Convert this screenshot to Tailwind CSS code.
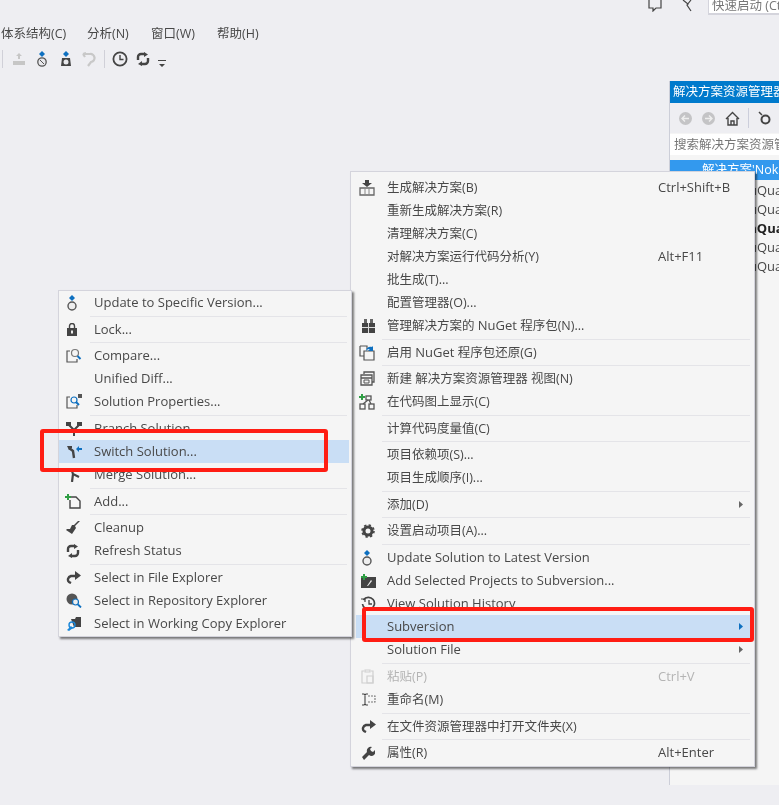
<!DOCTYPE html>
<html lang="zh">
<head>
<meta charset="utf-8">
<script src="https://cdn.jsdelivr.net/npm/@tailwindcss/browser@4"></script>
<title>Visual Studio</title>
</head>
<body class="m-0">
<div class="relative w-[779px] h-[805px] overflow-hidden bg-[#eeeef2] text-[#484848] text-[12.5px] leading-[16px] font-['Open_Sans','Noto_Sans_CJK_SC',sans-serif] blur-[0.5px]">

  <!-- top strip -->
  <div class="h-[15px] flex justify-end items-start">
    <svg class="w-[16px] h-[12px] mr-[19px]" viewBox="0 0 16 12" fill="none" stroke="#444" stroke-width="1.2"><path d="M2 0v8h4v3l3-3h5V0"/></svg>
    <svg class="w-[12px] h-[12px] mr-[14px]" viewBox="0 0 12 12" fill="none" stroke="#444" stroke-width="1.2"><path d="M1 0l5 4-1 1 4 6M5 5l4-5"/></svg>
    <div class="w-[71px] h-[15px] bg-white border-b-2 border-l border-[#d4d4dc] pl-[3px] leading-[11px] text-[#777] whitespace-nowrap overflow-hidden">快速启动 (Ctrl+Q)</div>
  </div>

  <!-- menu bar -->
  <div class="flex mt-[11px] h-[16px] pl-[1px] items-center">
    <span class="w-[86px]">体系结构(C)</span>
    <span class="w-[64px]">分析(N)</span>
    <span class="w-[66px]">窗口(W)</span>
    <span>帮助(H)</span>
  </div>

  <!-- toolbar -->
  <div class="flex items-center h-[20px] mt-[7px] pl-[2px]">
    <div class="w-px h-[18px] bg-[#d0d0d8]"></div>
    <svg class="w-[14px] h-[14px] ml-[9px]" viewBox="0 0 14 14" fill="#c6c6c6"><path d="M7 1l3 3H8v3H6V4H4zM1 9h12v4H1z"/></svg>
    <svg class="w-[14px] h-[16px] ml-[9px]" viewBox="0 0 14 16"><path d="M7 0l3 3-3 3-3-3z" fill="#0e70c0"/><circle cx="7" cy="11" r="4.2" fill="#e8e8ec" stroke="#555" stroke-width="1.3"/><path d="M5 9l4 4" stroke="#555"/></svg>
    <svg class="w-[14px] h-[16px] ml-[10px]" viewBox="0 0 14 16"><path d="M7 0l3 3-3 3-3-3z" fill="#0e70c0"/><path d="M3 7h8l1 8H2z" fill="#444"/><circle cx="7" cy="11" r="2.5" fill="#e8e8ec"/></svg>
    <svg class="w-[15px] h-[15px] ml-[8px]" viewBox="0 0 15 15" fill="none" stroke="#c8c8c8" stroke-width="2.2"><path d="M2 2h7a4 4 0 0 1 1 8l-3 4M2 2l3-1M2 2l2 3"/></svg>
    <div class="w-px h-[18px] bg-[#d0d0d8] ml-[8px]"></div>
    <svg class="w-[16px] h-[16px] ml-[7px]" viewBox="0 0 16 16" fill="none" stroke="#444" stroke-width="1.8"><circle cx="8" cy="8" r="6.6"/><path d="M8 4v4.5h3.5" stroke-width="1.4"/></svg>
    <svg class="w-[14px] h-[14px] ml-[8px]" viewBox="0 0 14 14" fill="none" stroke="#444" stroke-width="2.4"><path d="M2 8V5a3 3 0 0 1 3-3h4"/><path d="M12 6v3a3 3 0 0 1-3 3H5"/><path d="M8 0l4 2.500-4 2.500zM6 9l-4 3 4 2z" fill="#444" stroke="none"/></svg>
    <svg class="w-[8px] h-[8px] ml-[8px] mt-[9px]" viewBox="0 0 8 8" fill="#444"><path d="M0 0h8v1H0zM1 4h6L4 7z"/></svg>
  </div>

  <!-- solution explorer -->
  <div class="mt-[12px] ml-auto w-[110px] h-[704px] bg-[#f5f5f5] border-l border-[#ccced8] overflow-hidden whitespace-nowrap">
    <div class="h-[22px] bg-[#007acc] text-white flex items-center pl-[3px]">解决方案资源管理器</div>
    <div class="h-[30px] flex items-center bg-[#eeeef2] pl-[9px]">
      <svg class="w-[13px] h-[13px]" viewBox="0 0 13 13"><circle cx="6.5" cy="6.5" r="6.5" fill="#c4c4c6"/><path d="M3 6.5h7M6 3.5l-3 3 3 3" fill="none" stroke="#eee" stroke-width="1.4"/></svg>
      <svg class="w-[13px] h-[13px] ml-[10px]" viewBox="0 0 13 13"><circle cx="6.5" cy="6.5" r="6.5" fill="#c4c4c6"/><path d="M3 6.5h7M7 3.5l3 3-3 3" fill="none" stroke="#eee" stroke-width="1.4"/></svg>
      <svg class="w-[15px] h-[15px] ml-[10px]" viewBox="0 0 15 15" fill="none" stroke="#444" stroke-width="1.4"><path d="M1 8l6.5-6.500L14 8M3 7v7h9V7M6 14v-4h3v4"/></svg>
      <div class="w-px h-[20px] bg-[#cccedb] ml-[8px]"></div>
      <svg class="w-[13px] h-[14px] ml-[9px]" viewBox="0 0 13 14" fill="none" stroke="#444" stroke-width="2"><circle cx="7.5" cy="8.5" r="4"/><path d="M1 1l3 3" stroke-width="1.5"/></svg>
    </div>
    <div class="h-[21px] mt-px bg-white text-[#777] flex items-center pl-[4px]">搜索解决方案资源管理器</div>
    <div class="mt-[5px] h-[20px] bg-[#3399ee] text-white flex items-center pl-[13px]">
      <svg class="w-[14px] h-[14px] mr-[19px]" viewBox="0 0 14 14"><rect x=".5" y=".5" width="13" height="13" fill="#f5f5f5" stroke="#444"/><rect x="4" y="4" width="5" height="5" fill="#444"/></svg>解决方案'Nokia
    </div>
    <div class="h-[19px] pl-[79px] flex items-center text-[13px]">uQuality</div>
    <div class="h-[19px] pl-[79px] flex items-center text-[13px]">uQuality</div>
    <div class="h-[19px] pl-[79px] flex items-center text-[13px] font-bold text-[#222]">aQuality</div>
    <div class="h-[19px] pl-[79px] flex items-center text-[13px]">uQuality</div>
    <div class="h-[19px] pl-[79px] flex items-center text-[13px]">uQuality</div>
  </div>

  <!-- solution context menu -->
  <div class="absolute left-[350px] top-[171px] w-[405px] h-[596px] bg-[#f5f5f5] border border-[#d4d4dc] pt-[4px] shadow-[2px_2px_2px_rgba(0,0,0,0.5)] whitespace-nowrap">
    <div class="h-[23px] flex items-center"><div class="w-[36px] flex justify-center -ml-[2px] mr-[2px]"><svg class="w-[16px] h-[16px]" viewBox="0 0 16 16"><path d="M6 0h4v3h3l-5 4-5-4h3z" fill="#444"/><path d="M1 8h14v7H1z" fill="none" stroke="#666" stroke-width="1.3"/><path d="M6 8v7M10 8v7" stroke="#888"/></svg></div><span class="w-[271px]">生成解决方案(B)</span><span class="text-[13px] pb-[2px]">Ctrl+Shift+B</span></div>
    <div class="h-[23px] flex items-center"><div class="w-[36px]"></div><span>重新生成解决方案(R)</span></div>
    <div class="h-[23px] flex items-center"><div class="w-[36px]"></div><span>清理解决方案(C)</span></div>
    <div class="h-[23px] flex items-center"><div class="w-[36px]"></div><span class="w-[271px]">对解决方案运行代码分析(Y)</span><span class="text-[13px] pb-[2px]">Alt+F11</span></div>
    <div class="h-[23px] flex items-center"><div class="w-[36px]"></div><span>批生成(T)...</span></div>
    <div class="h-[23px] flex items-center"><div class="w-[36px]"></div><span>配置管理器(O)...</span></div>
    <div class="h-[23px] flex items-center"><div class="w-[36px] flex justify-center -ml-[1px] mr-[1px]"><svg class="w-[13px] h-[15px]" viewBox="0 0 13 15"><path d="M0 5h13v10H0z" fill="#444"/><path d="M2 1h3v4H2zM8 1h3v4H8z" fill="#666"/><path d="M0 9.500h13M6.500 5v10" stroke="#ddd"/></svg></div><span>管理解决方案的 <span class="text-[13px]">NuGet</span> 程序包(N)...</span></div>
    <div class="h-[4px] ml-[31px] mr-[4px] flex items-center"><div class="h-px w-full bg-[#e4e4e8]"></div></div>
    <div class="h-[23px] flex items-center"><div class="w-[36px] flex justify-center -ml-[2px] mr-[2px]"><svg class="w-[16px] h-[16px]" viewBox="0 0 16 16" fill="none" stroke="#555" stroke-width="1.2"><path d="M1 1h7v3M1 1v10h4"/><path d="M5 6h10v9H5z" fill="#f5f5f5"/><path d="M7 6c0-3 3-5 6-4l1-1v5h-5l1.500-1.500C10 3.500 8.500 4.500 7 6z" fill="#0e70c0" stroke="none"/></svg></div><span>启用 <span class="text-[13px]">NuGet</span> 程序包还原(G)</span></div>
    <div class="h-[3px] ml-[31px] mr-[4px] flex items-center"><div class="h-px w-full bg-[#e4e4e8]"></div></div>
    <div class="h-[23px] flex items-center"><div class="w-[36px] flex justify-center -ml-[2px] mr-[2px]"><svg class="w-[15px] h-[15px]" viewBox="0 0 15 15" fill="none" stroke="#555" stroke-width="1.3"><path d="M4 3V1h10v10h-2"/><path d="M1 4h11v10H1zM1 7h11"/><path d="M4 9h5v3H4z" stroke-width="1"/></svg></div><span>新建 解决方案资源管理器 视图(N)</span></div>
    <div class="h-[23px] flex items-center"><div class="w-[36px] flex justify-center -ml-[2px] mr-[2px]"><svg class="w-[16px] h-[16px]" viewBox="0 0 16 16" fill="none" stroke="#555" stroke-width="1.3"><path d="M3 0v6M0 3h6" stroke="#2f9e44" stroke-width="2"/><rect x="7" y="2" width="5" height="4"/><rect x="1" y="10" width="5" height="5"/><rect x="10" y="10" width="5" height="5"/><path d="M9 6l-5 4M10 6l2 4"/></svg></div><span>在代码图上显示(C)</span></div>
    <div class="h-[4px] ml-[31px] mr-[4px] flex items-center"><div class="h-px w-full bg-[#e4e4e8]"></div></div>
    <div class="h-[23px] flex items-center"><div class="w-[36px]"></div><span>计算代码度量值(C)</span></div>
    <div class="h-[3px] ml-[31px] mr-[4px] flex items-center"><div class="h-px w-full bg-[#e4e4e8]"></div></div>
    <div class="h-[23px] flex items-center"><div class="w-[36px]"></div><span>项目依赖项(S)...</span></div>
    <div class="h-[23px] flex items-center"><div class="w-[36px]"></div><span>项目生成顺序(I)...</span></div>
    <div class="h-[4px] ml-[31px] mr-[4px] flex items-center"><div class="h-px w-full bg-[#e4e4e8]"></div></div>
    <div class="h-[23px] flex items-center"><div class="w-[36px]"></div><span class="w-[352px]">添加(D)</span><svg class="w-[4px] h-[7px]" viewBox="0 0 4 7" fill="#666"><path d="M0 0l4 3.500L0 7z"/></svg></div>
    <div class="h-[3px] ml-[31px] mr-[4px] flex items-center"><div class="h-px w-full bg-[#e4e4e8]"></div></div>
    <div class="h-[23px] flex items-center"><div class="w-[36px] flex justify-center -ml-[1px] mr-[1px]"><svg class="w-[14px] h-[14px]" viewBox="0 0 14 14" fill="none" stroke="#444"><circle cx="7" cy="7" r="4" stroke-width="3"/><circle cx="7" cy="7" r="6" stroke-width="1.6" stroke-dasharray="2.4 2.3"/></svg></div><span>设置启动项目(A)...</span></div>
    <div class="h-[4px] ml-[31px] mr-[4px] flex items-center"><div class="h-px w-full bg-[#e4e4e8]"></div></div>
    <div class="h-[23px] flex items-center text-[13px] [&_span]:pb-[2px]"><div class="w-[36px] flex justify-center -ml-[2px] mr-[2px]"><svg class="w-[12px] h-[16px]" viewBox="0 0 12 16"><path d="M6 0l3 3-3 3-3-3z" fill="#0e70c0"/><circle cx="6" cy="11" r="4" fill="#eee" stroke="#555" stroke-width="1.4"/></svg></div><span>Update Solution to Latest Version</span></div>
    <div class="h-[23px] flex items-center text-[13px] [&_span]:pb-[2px]"><div class="w-[36px] flex justify-center -ml-[1px] mr-[1px]"><svg class="w-[15px] h-[14px]" viewBox="0 0 15 14"><path d="M0 3h15v11H0z" fill="#444"/><path d="M3 0v6M0 3h6" stroke="#2f9e44" stroke-width="2"/><path d="M6 12l4-6 1 1-4 5z" fill="#eee"/></svg></div><span>Add Selected Projects to Subversion...</span></div>
    <div class="h-[23px] flex items-center text-[13px] [&_span]:pb-[2px]"><div class="w-[36px] flex justify-center -ml-[1px] mr-[1px]"><svg class="w-[15px] h-[15px]" viewBox="0 0 15 15" fill="none" stroke="#444" stroke-width="1.7"><path d="M2.500 4a6 6 0 1 1-1 4"/><path d="M8 4v4h3" stroke-width="1.3"/><path d="M0 3h4v3" stroke-width="1.2"/></svg></div><span>View Solution History</span></div>
    <div class="h-[23px] flex items-center bg-[#c9def5] mr-[3px] ml-[5px] text-[13px] [&_span]:pb-[2px]"><div class="w-[31px]"></div><span class="w-[352px]">Subversion</span><svg class="w-[4px] h-[7px]" viewBox="0 0 4 7" fill="#0e70c0"><path d="M0 0l4 3.500L0 7z"/></svg></div>
    <div class="h-[23px] flex items-center text-[13px] [&_span]:pb-[2px]"><div class="w-[36px]"></div><span class="w-[352px]">Solution File</span><svg class="w-[4px] h-[7px]" viewBox="0 0 4 7" fill="#666"><path d="M0 0l4 3.500L0 7z"/></svg></div>
    <div class="h-[4px] ml-[31px] mr-[4px] flex items-center"><div class="h-px w-full bg-[#e4e4e8]"></div></div>
    <div class="h-[23px] flex items-center text-[#b4b4b4]"><div class="w-[36px] flex justify-center -ml-[2px] mr-[2px]"><svg class="w-[13px] h-[15px]" viewBox="0 0 13 15" fill="none" stroke="#d0d0d0" stroke-width="1.2"><path d="M3 2H1v12h11V2h-2M4 3V1h5v2z"/><path d="M6 7h6v7H6z"/></svg></div><span class="w-[271px]">粘贴(P)</span><span class="text-[13px] pb-[2px]">Ctrl+V</span></div>
    <div class="h-[23px] flex items-center"><div class="w-[36px] flex justify-center -ml-[1px] mr-[1px]"><svg class="w-[15px] h-[13px]" viewBox="0 0 15 13" fill="none" stroke="#444" stroke-width="1.1"><path d="M1 1h2l1 1 1-1h2M4 2v9M1 12h2l1-1 1 1h2"/><path d="M7 3h7v6H7" stroke="#777" stroke-dasharray="2 1"/></svg></div><span>重命名(M)</span></div>
    <div class="h-[4px] ml-[31px] mr-[4px] flex items-center"><div class="h-px w-full bg-[#e4e4e8]"></div></div>
    <div class="h-[23px] flex items-center"><div class="w-[36px] flex justify-center -ml-[1px] mr-[1px]"><svg class="w-[15px] h-[13px]" viewBox="0 0 15 13" fill="none" stroke="#444" stroke-width="2.400"><path d="M5 12l-2-1c-2-2-1-5 2-6h5"/><path d="M9 0l6 4.500L9 9z" fill="#444" stroke="none"/></svg></div><span>在文件资源管理器中打开文件夹(X)</span></div>
    <div class="h-[3px] ml-[31px] mr-[4px] flex items-center"><div class="h-px w-full bg-[#e4e4e8]"></div></div>
    <div class="h-[23px] flex items-center"><div class="w-[36px] flex justify-center -ml-[1px] mr-[1px]"><svg class="w-[14px] h-[14px]" viewBox="0 0 14 14" fill="#444"><path d="M1 11l5-5a4 4 0 0 1 5-5L9 3l1 2 2 1 2-2a4 4 0 0 1-6 5l-5 5z"/></svg></div><span class="w-[271px]">属性(R)</span><span class="text-[13px] pb-[2px]">Alt+Enter</span></div>
  </div>

  <!-- subversion submenu -->
  <div class="absolute left-[58px] top-[290px] w-[294px] h-[347px] bg-[#f5f5f5] border border-[#d4d4dc] shadow-[2px_2px_2px_rgba(0,0,0,0.5)] whitespace-nowrap text-[13px] [&_span]:pb-[2px]">
    <div class="h-[23px] flex items-center"><div class="w-[35px] pl-[7px]"><svg class="w-[12px] h-[16px]" viewBox="0 0 12 16"><path d="M6 0l3 3-3 3-3-3z" fill="#0e70c0"/><circle cx="6" cy="11" r="4" fill="#eee" stroke="#555" stroke-width="1.4"/></svg></div><span>Update to Specific Version...</span></div>
    <div class="h-[4px] ml-[31px] mr-[4px] flex items-center"><div class="h-px w-full bg-[#e4e4e8]"></div></div>
    <div class="h-[23px] flex items-center"><div class="w-[35px] pl-[8px]"><svg class="w-[10px] h-[13px]" viewBox="0 0 10 13" fill="#444"><path d="M0 5h10v8H0z"/><path d="M2.500 5V3a2.500 2.500 0 0 1 5 0v2" fill="none" stroke="#444" stroke-width="1.4"/><rect x="4" y="7.500" width="2" height="3" fill="#eee"/></svg></div><span>Lock...</span></div>
    <div class="h-[3px] ml-[31px] mr-[4px] flex items-center"><div class="h-px w-full bg-[#e4e4e8]"></div></div>
    <div class="h-[23px] flex items-center"><div class="w-[35px] pl-[7px]"><svg class="w-[16px] h-[15px]" viewBox="0 0 16 15" fill="none" stroke="#555" stroke-width="1.2"><path d="M4 3H1v11h10v-3"/><circle cx="9" cy="5" r="3.500" stroke="#777"/><path d="M11.500 8l3 3" stroke="#0e70c0" stroke-width="2"/></svg></div><span>Compare...</span></div>
    <div class="h-[23px] flex items-center"><div class="w-[35px]"></div><span>Unified Diff...</span></div>
    <div class="h-[23px] flex items-center"><div class="w-[35px] pl-[7px]"><svg class="w-[16px] h-[15px]" viewBox="0 0 16 15" fill="none" stroke="#555" stroke-width="1.2"><path d="M4 3H1v11h10v-3"/><circle cx="8" cy="6" r="3" stroke="#0e70c0"/><path d="M10 8l3 3" stroke="#0e70c0" stroke-width="2"/><path d="M12 0h4v4h-4z" fill="#555" stroke="none"/></svg></div><span>Solution Properties...</span></div>
    <div class="h-[4px] ml-[31px] mr-[4px] flex items-center"><div class="h-px w-full bg-[#e4e4e8]"></div></div>
    <div class="h-[23px] flex items-center"><div class="w-[35px] pl-[7px]"><svg class="w-[16px] h-[14px]" viewBox="0 0 16 14" fill="none" stroke="#444" stroke-width="2"><path d="M2 2l6 6 6-6M8 8v6"/><path d="M0 0h5v4H0zM11 0h5v4h-5z" fill="#444" stroke="none"/></svg></div><span>Branch Solution...</span></div>
    <div class="h-[23px] flex items-center bg-[#c9def5] mr-[2px]"><div class="w-[35px] pl-[7px]"><svg class="w-[16px] h-[14px]" viewBox="0 0 16 14" fill="none"><path d="M3 3l4 3 1 7" stroke="#444" stroke-width="2.400"/><path d="M1 1h5v2l-3 2z" fill="#444"/><path d="M10 4l3-3v2h3v2h-3v2z" fill="#0e70c0"/></svg></div><span>Switch Solution...</span></div>
    <div class="h-[23px] flex items-center"><div class="w-[35px] pl-[9px]"><svg class="w-[12px] h-[14px]" viewBox="0 0 12 14" fill="none" stroke="#444" stroke-width="2.200"><path d="M3 0l2 6 6 3M5 6l-1 8"/></svg></div><span>Merge Solution...</span></div>
    <div class="h-[4px] ml-[31px] mr-[4px] flex items-center"><div class="h-px w-full bg-[#e4e4e8]"></div></div>
    <div class="h-[23px] flex items-center"><div class="w-[35px] pl-[6px]"><svg class="w-[16px] h-[15px]" viewBox="0 0 16 15" fill="none"><path d="M3 0v6M0 3h6" stroke="#2f9e44" stroke-width="2"/><path d="M6 3h5l4 4v7H5V6" stroke="#444" stroke-width="1.400"/></svg></div><span>Add...</span></div>
    <div class="h-[3px] ml-[31px] mr-[4px] flex items-center"><div class="h-px w-full bg-[#e4e4e8]"></div></div>
    <div class="h-[23px] flex items-center"><div class="w-[35px] pl-[7px]"><svg class="w-[14px] h-[13px]" viewBox="0 0 14 13" fill="#444"><path d="M14 0l-5 5 1 2-4 6-6-4 1-1 3 0 2-4 2 0 5-5z"/></svg></div><span>Cleanup</span></div>
    <div class="h-[23px] flex items-center"><div class="w-[35px] pl-[7px]"><svg class="w-[14px] h-[14px]" viewBox="0 0 14 14" fill="none" stroke="#444" stroke-width="2.400"><path d="M2 8V5a3 3 0 0 1 3-3h4"/><path d="M12 6v3a3 3 0 0 1-3 3H5"/><path d="M8 0l4 2.500-4 2.500zM6 9l-4 3 4 2z" fill="#444" stroke="none"/></svg></div><span>Refresh Status</span></div>
    <div class="h-[4px] ml-[31px] mr-[4px] flex items-center"><div class="h-px w-full bg-[#e4e4e8]"></div></div>
    <div class="h-[23px] flex items-center"><div class="w-[35px] pl-[7px]"><svg class="w-[15px] h-[13px]" viewBox="0 0 15 13" fill="none" stroke="#444" stroke-width="2.400"><path d="M5 12l-2-1c-2-2-1-5 2-6h5"/><path d="M9 0l6 4.500L9 9z" fill="#444" stroke="none"/></svg></div><span>Select in File Explorer</span></div>
    <div class="h-[23px] flex items-center"><div class="w-[35px] pl-[7px]"><svg class="w-[16px] h-[15px]" viewBox="0 0 16 15" fill="none"><circle cx="6" cy="6" r="5.500" fill="#555"/><circle cx="9.500" cy="9" r="3" fill="#eee" stroke="#0e70c0" stroke-width="1.200"/><path d="M12 11.500l3 3" stroke="#0e70c0" stroke-width="1.800"/></svg></div><span>Select in Repository Explorer</span></div>
    <div class="h-[23px] flex items-center"><div class="w-[35px] pl-[7px]"><svg class="w-[15px] h-[14px]" viewBox="0 0 15 14"><path d="M5 2h4l1-2h5v10H8z" fill="#444"/><path d="M1 13l4-4 2 2-4 3z" fill="#1b87d8"/><circle cx="6" cy="8" r="3" fill="none" stroke="#1b87d8" stroke-width="1.400"/></svg></div><span>Select in Working Copy Explorer</span></div>
  </div>

  <!-- red annotation boxes -->
  <div class="absolute left-[40px] top-[429px] w-[288px] h-[43px] border-[4px] border-[#ff1d13] rounded-[3px]"></div>
  <div class="absolute left-[362px] top-[607px] w-[392px] h-[35px] border-[4px] border-[#ff1d13] rounded-[3px]"></div>
</div>
</body>
</html>
